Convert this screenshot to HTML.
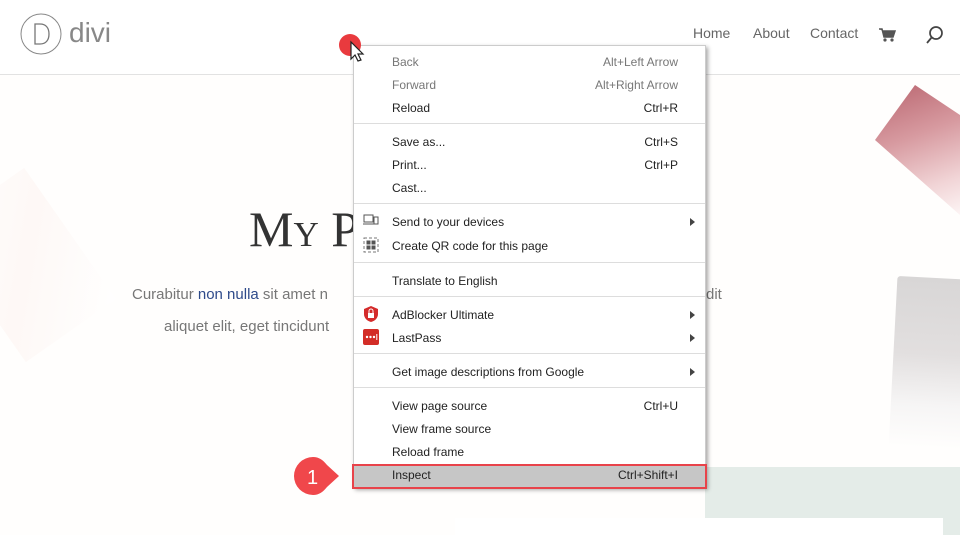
<!DOCTYPE html>
<html><head><meta charset="utf-8"><style>
*{margin:0;padding:0;box-sizing:border-box}
body{width:960px;height:535px;overflow:hidden;position:relative;background:#fff;font-family:"Liberation Sans",sans-serif}
.hdr{position:absolute;left:0;top:0;width:960px;height:75px;border-bottom:1px solid #e2e2e2;background:#fff}
.nav{position:absolute;top:25px;font-size:14px;color:#666}
.hero{position:absolute;left:0;top:75px;width:960px;height:460px;background:#fffefd;overflow:hidden}
.title{position:absolute;left:249px;top:200px;font-family:"Liberation Serif",serif;font-size:50px;color:#333;font-variant:small-caps}
.p{position:absolute;font-size:15px;color:#777}
.menu{position:absolute;left:353px;top:45px;width:353px;height:443px;background:#fff;border:1px solid #ccc;box-shadow:2px 2px 4px rgba(0,0,0,.35);font-size:12px;color:#222}
.it{position:absolute;left:38px;height:20px;line-height:20px;width:300px}
.it .k{position:absolute;right:14px;top:0}
.dis{color:#777}
.sep{position:absolute;left:0;width:351px;height:1px;background:#ddd}
.ar{position:absolute;left:336px;width:0;height:0;border-left:5px solid #444;border-top:4px solid transparent;border-bottom:4px solid transparent}
</style></head><body>
<div class="hero">
 <div style="position:absolute;left:-30px;top:110px;width:110px;height:160px;background:linear-gradient(135deg,#fff 0%,#fdf4f1 50%,#fff 100%);transform:rotate(-35deg);opacity:.6"></div>
 <div style="position:absolute;left:0;top:0;width:960px;height:460px;background:linear-gradient(160deg,#b9656f 0%,#d79aa0 40%,#f1d4d6 75%,#fdf6f6 100%);clip-path:polygon(915px 10px,960px 40px,960px 140px,875px 65px);background-size:90px 130px;background-position:875px 10px;background-repeat:no-repeat"></div>
 <div style="position:absolute;left:893px;top:203px;width:80px;height:170px;background:linear-gradient(180deg,#d8d6d6 0%,#e2dfdf 45%,#f6f5f5 75%,rgba(255,255,255,0) 100%);transform:rotate(3deg);border-radius:3px"></div>
 <div style="position:absolute;left:705px;top:392px;width:255px;height:70px;background:#e4ece8"></div>
 <div style="position:absolute;left:455px;top:443px;width:488px;height:20px;background:#fff"></div>
</div>
<div class="hdr">
 <svg style="position:absolute;left:20px;top:13px" width="44" height="44"><circle cx="21" cy="21" r="20" fill="none" stroke="#888" stroke-width="1"/><path d="M15 11v20h5c6 0 9-4 9-10s-3-10-9-10z" fill="none" stroke="#777" stroke-width="1.3"/></svg>
 <div style="position:absolute;left:69px;top:17px;font-size:28px;color:#888">divi</div>
 <div class="nav" style="left:693px">Home</div>
 <div class="nav" style="left:753px">About</div>
 <div class="nav" style="left:810px">Contact</div>
 <svg style="position:absolute;left:878px;top:27px" width="18" height="16"><path d="M1 2h3l2 8h9l2-6H5" fill="#555" stroke="#555" stroke-width="1.5"/><circle cx="7" cy="13" r="1.6" fill="#555"/><circle cx="14" cy="13" r="1.6" fill="#555"/></svg>
 <svg style="position:absolute;left:925px;top:25px" width="20" height="20"><circle cx="11" cy="8" r="6" fill="none" stroke="#444" stroke-width="1.7"/><path d="M7 12L2 18" stroke="#444" stroke-width="1.8"/></svg>
</div>
<div class="title">My P</div>
<div class="p" style="left:132px;top:286px">Curabitur <span style="color:#2e4a8a">non nulla</span> sit amet n</div>
<div class="p" style="left:706px;top:286px">dit</div>
<div class="p" style="left:164px;top:318px">aliquet elit, eget tincidunt</div>
<div class="menu">
 <div class="it dis" style="top:6px">Back<span class="k">Alt+Left Arrow</span></div>
 <div class="it dis" style="top:29px">Forward<span class="k">Alt+Right Arrow</span></div>
 <div class="it" style="top:52px">Reload<span class="k">Ctrl+R</span></div>
 <div class="sep" style="top:77px"></div>
 <div class="it" style="top:86px">Save as...<span class="k">Ctrl+S</span></div>
 <div class="it" style="top:109px">Print...<span class="k">Ctrl+P</span></div>
 <div class="it" style="top:132px">Cast...</div>
 <div class="sep" style="top:157px"></div>
 <svg style="position:absolute;left:9px;top:168px" width="16" height="12"><rect x="1" y="1" width="9" height="7" fill="none" stroke="#555"/><path d="M0 10h11" stroke="#555"/><rect x="11" y="3" width="4" height="7" fill="none" stroke="#555"/></svg>
 <div class="it" style="top:166px">Send to your devices</div><div class="ar" style="top:172px"></div>
 <svg style="position:absolute;left:9px;top:191px" width="16" height="16"><rect x="1" y="1" width="14" height="14" fill="none" stroke="#777" stroke-dasharray="3 2"/><rect x="3.5" y="3.5" width="4" height="4" fill="#555"/><rect x="8.5" y="3.5" width="4" height="4" fill="#555"/><rect x="3.5" y="8.5" width="4" height="4" fill="#555"/><rect x="8.5" y="8.5" width="4" height="4" fill="#555"/></svg>
 <div class="it" style="top:190px">Create QR code for this page</div>
 <div class="sep" style="top:216px"></div>
 <div class="it" style="top:225px">Translate to English</div>
 <div class="sep" style="top:250px"></div>
 <svg style="position:absolute;left:9px;top:259px" width="16" height="18"><path d="M8 1L15 4v5c0 4-3 7-7 8-4-1-7-4-7-8V4z" fill="#d42b2b"/><rect x="5" y="8" width="6" height="5" fill="#fff"/><path d="M6 8V6a2 2 0 014 0v2" fill="none" stroke="#fff"/></svg>
 <div class="it" style="top:259px">AdBlocker Ultimate</div><div class="ar" style="top:265px"></div>
 <svg style="position:absolute;left:9px;top:283px" width="16" height="16"><rect width="16" height="16" rx="2" fill="#d32d27"/><circle cx="4" cy="8" r="1.2" fill="#fff"/><circle cx="7.5" cy="8" r="1.2" fill="#fff"/><circle cx="11" cy="8" r="1.2" fill="#fff"/><rect x="13.3" y="5" width="1" height="6" fill="#fff"/></svg>
 <div class="it" style="top:282px">LastPass</div><div class="ar" style="top:288px"></div>
 <div class="sep" style="top:307px"></div>
 <div class="it" style="top:316px">Get image descriptions from Google</div><div class="ar" style="top:322px"></div>
 <div class="sep" style="top:341px"></div>
 <div class="it" style="top:350px">View page source<span class="k">Ctrl+U</span></div>
 <div class="it" style="top:373px">View frame source</div>
 <div class="it" style="top:396px">Reload frame</div>
 <div style="position:absolute;left:-2px;top:418px;width:355px;height:25px;background:#c6c6c6;border:2px solid #e8434a"></div>
 <div class="it" style="top:419px">Inspect<span class="k">Ctrl+Shift+I</span></div>
</div>
<svg style="position:absolute;left:290px;top:453px" width="64" height="46"><path d="M23 4a19 19 0 100 38c6 0 10-3 14-8l12-11-12-11c-4-5-8-8-14-8z" fill="#f0474b"/><text x="17" y="31" font-family="Liberation Sans" font-size="20" fill="#fff">1</text></svg>
<svg style="position:absolute;left:336px;top:32px" width="32" height="34"><circle cx="14" cy="13" r="11" fill="#e93a3e"/><path d="M15 10v17l4-4 3 6 3-1-3-6h5z" fill="#fff" stroke="#222" stroke-width="1.2"/></svg>
</body></html>
